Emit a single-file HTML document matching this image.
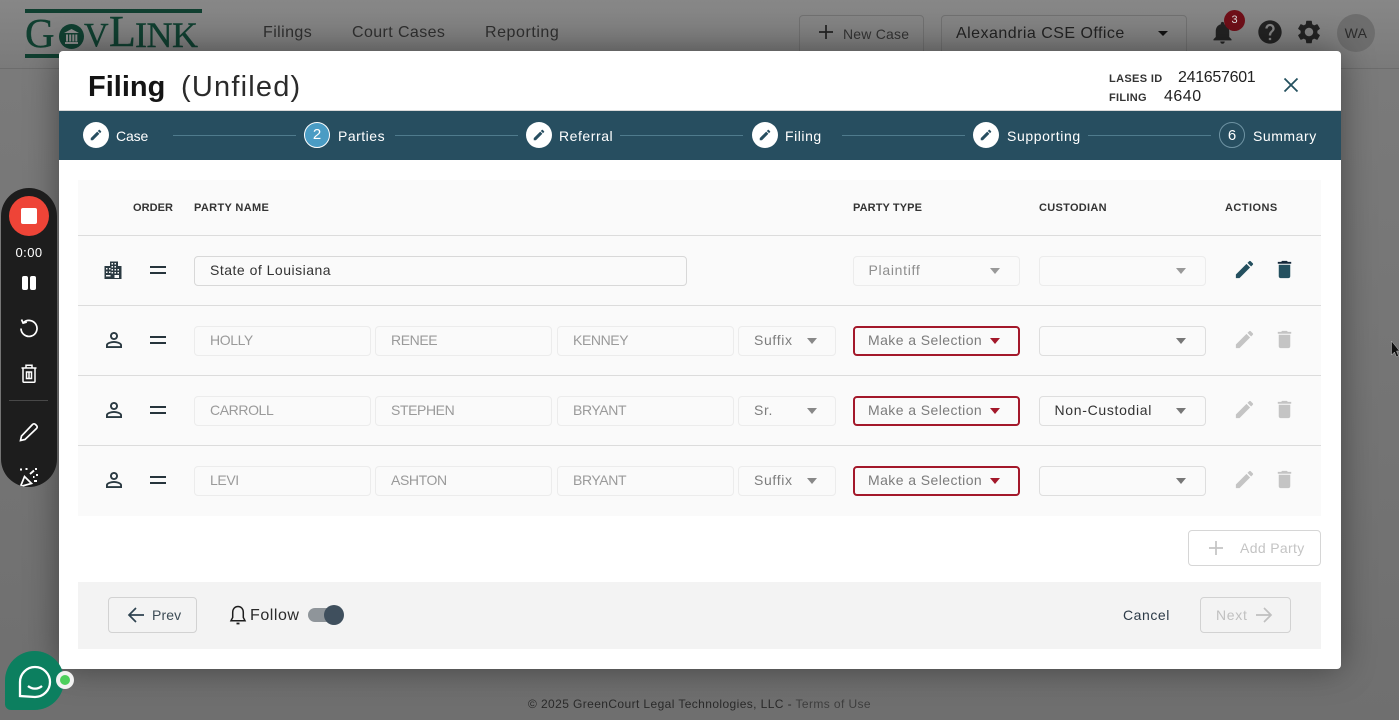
<!DOCTYPE html>
<html lang="en"><head><meta charset="utf-8"><title>Filing</title>
<style>
html,body{margin:0;padding:0;width:1399px;height:720px;overflow:hidden;background:#727272;font-family:"Liberation Sans",sans-serif}
.t,.f,.s,svg,.a,.l,.h{position:absolute}
.t{white-space:nowrap;line-height:20px}
.f,.s{box-sizing:border-box;height:29.5px;border:1.5px solid #ececec;border-radius:4px;background:#fafafa;font-size:14px;line-height:26.5px;padding-left:14.5px;letter-spacing:.5px;color:#9a9a9a;white-space:nowrap}
.u{letter-spacing:-.4px}
.s{border-color:#dedede;color:#7d7d7d}
.s.e{border:2px solid #a3182a;line-height:25.5px;padding-left:13px;letter-spacing:.42px;color:#7c7c7c}
.s.n{color:#333;letter-spacing:.68px}
.c{position:absolute;width:0;height:0;border-left:5.5px solid transparent;border-right:5.5px solid transparent;border-top:6px solid #777}
.l{height:1px;background:#dcdcdc;left:78px;width:1243px}
.h{font-size:11px;font-weight:bold;letter-spacing:.3px;color:#333;line-height:14px;white-space:nowrap}
.st{color:#fff;font-size:14px;letter-spacing:.5px;position:absolute;line-height:20px;top:126px;white-space:nowrap}
.cl{position:absolute;top:135px;height:1px;width:123px;background:#4f7b8d}
.ci{position:absolute;top:122px;width:26px;height:26px;border-radius:50%;background:#fff}
.ci svg{left:6px;top:6px}
.lg{font-family:"Liberation Serif",serif;color:#103f30;-webkit-text-stroke:.4px #103f30}
</style></head><body>

<!-- page background -->
<div class="a" style="left:0;top:0;width:1399px;height:68px;background:linear-gradient(#878787,#7a7a7a);border-bottom:1px solid #6c6c6c"></div>
<div class="a" style="left:0;top:69px;width:1399px;height:651px;background:linear-gradient(#7a7a7a,#6f6f6f)"></div>

<!-- logo -->
<div class="a" style="left:25px;top:9px;width:177px;height:3.5px;background:#103f30"></div>
<div class="a" style="left:25px;top:54px;width:177px;height:3.5px;background:#103f30"></div>
<div class="t lg" style="left:25px;top:15px;font-size:41px;line-height:36px">G</div>
<div class="a" style="left:59px;top:24px;width:25px;height:25px;border-radius:50%;background:#103f30"></div>
<svg style="left:63px;top:28px" width="17" height="17" viewBox="0 0 17 17"><path d="M8.5 1L16 5H1zM2 14h13v2H2zM3 6.500h2v7H3zM6.200 6.500h2v7h-2zM9.300 6.500h2v7h-2zM12.300 6.500h2v7h-2z" fill="#8b8b8b"/></svg>
<div class="t lg" style="left:84px;top:21px;font-size:34px;line-height:30px">V</div>
<div class="t lg" style="left:109px;top:12px;font-size:44px;line-height:40px">L</div>
<div class="t lg" style="left:135px;top:19px;font-size:36px;line-height:32px;letter-spacing:-.5px">INK</div>

<!-- nav -->
<div class="t" style="left:263px;top:23px;font-size:16px;letter-spacing:.42px;color:#2f2f2f">Filings</div>
<div class="t" style="left:352px;top:23px;font-size:16px;letter-spacing:.4px;color:#2f2f2f">Court Cases</div>
<div class="t" style="left:485px;top:23px;font-size:16px;letter-spacing:.55px;color:#2f2f2f">Reporting</div>

<div class="a" style="left:799px;top:15px;width:125px;height:50px;box-sizing:border-box;border:1px solid #707070;border-radius:4px"></div>
<svg style="left:817px;top:23px" width="18" height="18" viewBox="0 0 18 18"><path d="M9 2v14M2 9h14" stroke="#222" stroke-width="1.700" fill="none"/></svg>
<div class="t" style="left:843px;top:24px;font-size:14px;letter-spacing:.2px;color:#333">New Case</div>
<div class="a" style="left:941px;top:15px;width:246px;height:50px;box-sizing:border-box;border:1px solid #707070;border-radius:4px"></div>
<div class="t" style="left:956px;top:24px;font-size:16px;letter-spacing:.47px;color:#222">Alexandria CSE Office</div>
<div class="c" style="left:1158px;top:31px;border-top-color:#111;border-left-width:5px;border-right-width:5px;border-top-width:5px"></div>

<svg style="left:1209px;top:19px" width="27" height="27" viewBox="0 0 24 24"><path fill="#222" d="M12 22c1.100 0 2-.9 2-2h-4c0 1.100.9 2 2 2zm6-6v-5c0-3.070-1.630-5.640-4.500-6.320V4c0-.83-.67-1.500-1.500-1.500s-1.500.67-1.500 1.500v.68C7.640 5.360 6 7.920 6 11v5l-2 2v1h16v-1l-2-2z"/></svg>
<div class="a" style="left:1224px;top:10px;width:21px;height:21px;border-radius:50%;background:#6e0f18;color:#ddd;font-size:11px;line-height:21px;text-align:center">3</div>
<svg style="left:1256px;top:18px" width="28" height="28" viewBox="0 0 24 24"><path fill="#222" d="M12 2C6.480 2 2 6.480 2 12s4.480 10 10 10 10-4.480 10-10S17.520 2 12 2zm1 17h-2v-2h2v2zm2.070-7.750l-.9.92C13.450 12.900 13 13.500 13 15h-2v-.5c0-1.100.45-2.100 1.170-2.830l1.240-1.260c.37-.36.59-.86.59-1.410 0-1.100-.9-2-2-2s-2 .9-2 2H8c0-2.210 1.790-4 4-4s4 1.790 4 4c0 .88-.36 1.680-.93 2.250z"/></svg>
<svg style="left:1295px;top:18px" width="28" height="28" viewBox="0 0 24 24"><path fill="#222" d="M19.140 12.940c.04-.3.06-.61.06-.94 0-.32-.02-.64-.07-.94l2.030-1.580c.18-.14.23-.41.12-.61l-1.920-3.320c-.12-.22-.37-.29-.59-.22l-2.390.96c-.5-.38-1.030-.7-1.620-.94l-.36-2.540c-.04-.24-.24-.41-.48-.41h-3.840c-.24 0-.43.17-.47.41l-.36 2.540c-.59.24-1.130.57-1.620.94l-2.390-.96c-.22-.08-.47 0-.59.22L2.740 8.870c-.12.21-.08.47.12.61l2.030 1.580c-.05.3-.09.63-.09.94s.02.64.07.94l-2.030 1.580c-.18.14-.23.41-.12.61l1.920 3.320c.12.22.37.29.59.22l2.390-.96c.5.38 1.030.7 1.620.94l.36 2.540c.05.24.24.41.48.41h3.840c.24 0 .44-.17.47-.41l.36-2.540c.59-.24 1.130-.56 1.620-.94l2.390.96c.22.08.47 0 .59-.22l1.920-3.320c.12-.22.07-.47-.12-.61l-2.010-1.580zM12 15.600c-1.980 0-3.600-1.620-3.600-3.600s1.620-3.600 3.600-3.600 3.600 1.620 3.600 3.600-1.620 3.600-3.600 3.600z"/></svg>
<div class="a" style="left:1337px;top:14px;width:38px;height:38px;border-radius:50%;background:#6d6d6d;color:#2c2c2c;font-size:14px;line-height:38px;text-align:center;letter-spacing:.3px">WA</div>

<!-- footer -->
<div class="t" style="left:528px;top:694px;font-size:12px;letter-spacing:.4px;color:#2a2a2a">© 2025 GreenCourt Legal Technologies, LLC - <span style="color:#3e3e3e">Terms of Use</span></div>

<!-- modal -->
<div class="a" style="left:59px;top:51px;width:1282px;height:618px;background:#fff;border-radius:4px;box-shadow:0 0 34px rgba(0,0,0,.42)"></div>
<div class="t" style="left:88px;top:69px;font-size:29px;line-height:36px;font-weight:bold;color:#141414">Filing</div>
<div class="t" style="left:181px;top:69px;font-size:29px;line-height:36px;letter-spacing:1.2px;color:#2b2b2b">(Unfiled)</div>
<div class="t" style="left:1109px;top:69px;font-size:11px;font-weight:bold;letter-spacing:.35px;color:#333">LASES ID</div>
<div class="t" style="left:1178px;top:68px;font-size:16px;letter-spacing:-.3px;color:#222">241657601</div>
<div class="t" style="left:1109px;top:88px;font-size:11px;font-weight:bold;letter-spacing:.3px;color:#333">FILING</div>
<div class="t" style="left:1164px;top:87px;font-size:16px;letter-spacing:.5px;color:#222">4640</div>
<svg style="left:1281px;top:75px" width="20" height="20" viewBox="0 0 20 20"><path d="M3.500 3.500l13 13M16.500 3.500l-13 13" stroke="#24505f" stroke-width="1.800" fill="none"/></svg>

<!-- stepper -->
<div class="a" style="left:59px;top:110px;width:1282px;height:1px;background:#d9d9d9"></div>
<div class="a" style="left:59px;top:111px;width:1282px;height:49px;background:#274e60"></div>
<div class="ci" style="left:82.500px"><svg width="14" height="14" viewBox="0 0 24 24"><path fill="#274e60" d="M3 17.250V21h3.750L17.810 9.940l-3.750-3.750L3 17.250zM20.710 7.040c.39-.39.39-1.020 0-1.410l-2.340-2.340c-.39-.39-1.020-.39-1.410 0l-1.830 1.830 3.750 3.750 1.830-1.830z"/></svg></div>
<div class="st" style="left:116px;letter-spacing:-.15px">Case</div>
<div class="cl" style="left:173px"></div>
<div class="a" style="left:304px;top:122px;width:26px;height:26px;box-sizing:border-box;border:1.500px solid #fff;border-radius:50%;background:#4a9cc4;color:#fff;font-size:15px;line-height:24px;text-align:center">2</div>
<div class="st" style="left:338px">Parties</div>
<div class="cl" style="left:395px"></div>
<div class="ci" style="left:526px"><svg width="14" height="14" viewBox="0 0 24 24"><path fill="#274e60" d="M3 17.250V21h3.750L17.810 9.940l-3.750-3.750L3 17.250zM20.710 7.040c.39-.39.39-1.020 0-1.410l-2.340-2.340c-.39-.39-1.020-.39-1.410 0l-1.830 1.830 3.750 3.750 1.830-1.830z"/></svg></div>
<div class="st" style="left:559px;letter-spacing:.55px">Referral</div>
<div class="cl" style="left:620px"></div>
<div class="ci" style="left:751.500px"><svg width="14" height="14" viewBox="0 0 24 24"><path fill="#274e60" d="M3 17.250V21h3.750L17.810 9.940l-3.750-3.750L3 17.250zM20.710 7.040c.39-.39.39-1.020 0-1.410l-2.340-2.340c-.39-.39-1.020-.39-1.410 0l-1.830 1.830 3.750 3.750 1.830-1.830z"/></svg></div>
<div class="st" style="left:785px;letter-spacing:.55px">Filing</div>
<div class="cl" style="left:842px"></div>
<div class="ci" style="left:973px"><svg width="14" height="14" viewBox="0 0 24 24"><path fill="#274e60" d="M3 17.250V21h3.750L17.810 9.940l-3.750-3.750L3 17.250zM20.710 7.040c.39-.39.39-1.020 0-1.410l-2.340-2.340c-.39-.39-1.020-.39-1.410 0l-1.830 1.830 3.750 3.750 1.830-1.830z"/></svg></div>
<div class="st" style="left:1007px;letter-spacing:.6px">Supporting</div>
<div class="cl" style="left:1088px"></div>
<div class="a" style="left:1219px;top:122px;width:26px;height:26px;box-sizing:border-box;border:1px solid #6e93a3;border-radius:50%;color:#fff;font-size:15px;line-height:25px;text-align:center">6</div>
<div class="st" style="left:1253px;letter-spacing:.55px">Summary</div>

<!-- table -->
<div class="a" style="left:78px;top:180px;width:1243px;height:336px;background:#fafafa"></div>
<div class="h" style="left:133px;top:201px;letter-spacing:.05px">ORDER</div>
<div class="h" style="left:194px;top:201px;letter-spacing:.35px">PARTY NAME</div>
<div class="h" style="left:853px;top:201px;letter-spacing:.1px">PARTY TYPE</div>
<div class="h" style="left:1039px;top:201px;letter-spacing:.3px">CUSTODIAN</div>
<div class="h" style="left:1225px;top:201px;letter-spacing:.45px">ACTIONS</div>
<div class="l" style="top:235px"></div>
<div class="l" style="top:305px"></div>
<div class="l" style="top:375px"></div>
<div class="l" style="top:445px"></div>

<!-- row 1 -->
<svg style="left:104px;top:261px" width="18" height="18" viewBox="0 0 18 18"><path fill="#2b3a42" fill-rule="evenodd" d="M6 .5h8v4.500h3.500V18H.500V5H6zM7.500 2v1.500H9V2zM10.500 2v1.500H12V2zM7.500 5v1.500H9V5zM10.500 5v1.500H12V5zM2 7v1.500h1.500V7zM5 7v1.500h1.500V7zM7.500 8v1.500H9V8zM10.500 8v1.500H12V8zM13.500 8v1.500H15V8zM2 10.500V12h1.500v-1.500zM5 10.500V12h1.500v-1.500zM7.500 11v1.500H9V11zM10.500 11v1.500H12V11zM13.500 11v1.500H15V11zM2 14v1.500h4.500V14zM10.500 14v3H15v-3z"/></svg>
<div class="a" style="left:150px;top:266px;width:16px;height:2px;background:#26343c"></div>
<div class="a" style="left:150px;top:272px;width:16px;height:2px;background:#26343c"></div>
<div class="f" style="left:194px;top:256px;width:493px;border-color:#d8d8d8;color:#333;padding-left:15px">State of Louisiana</div>
<div class="f" style="left:853px;top:256px;width:167px;color:#8e8e8e;letter-spacing:.7px">Plaintiff</div><div class="c" style="left:990px;top:268px;border-top-color:#999"></div>
<div class="f" style="left:1039px;top:256px;width:167px"></div><div class="c" style="left:1176px;top:268px;border-top-color:#999"></div>
<svg style="left:1233px;top:258px" width="23" height="23" viewBox="0 0 24 24"><path fill="#24505f" d="M3 17.250V21h3.750L17.810 9.940l-3.750-3.750L3 17.250zM20.710 7.040c.39-.39.39-1.020 0-1.410l-2.340-2.340c-.39-.39-1.020-.39-1.410 0l-1.830 1.830 3.750 3.750 1.830-1.830z"/></svg>
<svg style="left:1273px;top:258px" width="23" height="23" viewBox="0 0 24 24"><path fill="#24505f" d="M6 19c0 1.100.9 2 2 2h8c1.100 0 2-.9 2-2V7H6v12z"/><path fill="#14283a" d="M19 4h-3.500l-1-1h-5l-1 1H5v2h14V4z"/></svg>

<!-- row 2 -->
<svg style="left:102px;top:328px" width="24" height="24" viewBox="0 0 24 24"><path fill="#2b3a42" d="M12 5.900a2.100 2.100 0 110 4.200 2.100 2.100 0 010-4.200m0 9c2.970 0 6.100 1.460 6.100 2.100v1.100H5.900V17c0-.64 3.130-2.100 6.100-2.100M12 4C9.790 4 8 5.790 8 8s1.790 4 4 4 4-1.790 4-4-1.790-4-4-4zm0 9c-2.670 0-8 1.340-8 4v3h16v-3c0-2.660-5.330-4-8-4z"/></svg>
<div class="a" style="left:150px;top:336px;width:16px;height:2px;background:#26343c"></div>
<div class="a" style="left:150px;top:342px;width:16px;height:2px;background:#26343c"></div>
<div class="f u" style="left:194px;top:326px;width:177px;padding-left:15px">HOLLY</div>
<div class="f u" style="left:375px;top:326px;width:177px;padding-left:15px">RENEE</div>
<div class="f u" style="left:557px;top:326px;width:177px;padding-left:15px">KENNEY</div>
<div class="f" style="left:738px;top:326px;width:98px;color:#7d7d7d;letter-spacing:.65px;padding-left:15px">Suffix</div><div class="c" style="left:807px;top:338px;border-top-color:#888"></div>
<div class="s e" style="left:853px;top:326px;width:167px">Make a Selection</div><div class="c" style="left:990px;top:338px;border-top-color:#a3182a"></div>
<div class="s" style="left:1039px;top:326px;width:167px"></div><div class="c" style="left:1176px;top:338px"></div>
<svg style="left:1233px;top:328px" width="23" height="23" viewBox="0 0 24 24"><path fill="#c4c4c4" d="M3 17.250V21h3.750L17.810 9.940l-3.750-3.750L3 17.250zM20.710 7.040c.39-.39.39-1.020 0-1.410l-2.340-2.340c-.39-.39-1.020-.39-1.410 0l-1.830 1.830 3.750 3.750 1.830-1.830z"/></svg>
<svg style="left:1273px;top:328px" width="23" height="23" viewBox="0 0 24 24"><path fill="#c4c4c4" d="M6 19c0 1.100.9 2 2 2h8c1.100 0 2-.9 2-2V7H6v12zM19 4h-3.500l-1-1h-5l-1 1H5v2h14V4z"/></svg>

<!-- row 3 -->
<svg style="left:102px;top:398px" width="24" height="24" viewBox="0 0 24 24"><path fill="#2b3a42" d="M12 5.900a2.100 2.100 0 110 4.200 2.100 2.100 0 010-4.200m0 9c2.970 0 6.100 1.460 6.100 2.100v1.100H5.900V17c0-.64 3.130-2.100 6.100-2.100M12 4C9.790 4 8 5.790 8 8s1.790 4 4 4 4-1.790 4-4-1.790-4-4-4zm0 9c-2.670 0-8 1.340-8 4v3h16v-3c0-2.660-5.330-4-8-4z"/></svg>
<div class="a" style="left:150px;top:406px;width:16px;height:2px;background:#26343c"></div>
<div class="a" style="left:150px;top:412px;width:16px;height:2px;background:#26343c"></div>
<div class="f u" style="left:194px;top:396px;width:177px;padding-left:15px">CARROLL</div>
<div class="f u" style="left:375px;top:396px;width:177px;padding-left:15px">STEPHEN</div>
<div class="f u" style="left:557px;top:396px;width:177px;padding-left:15px">BRYANT</div>
<div class="f" style="left:738px;top:396px;width:98px;color:#7d7d7d;letter-spacing:.65px;padding-left:15px">Sr.</div><div class="c" style="left:807px;top:408px;border-top-color:#888"></div>
<div class="s e" style="left:853px;top:396px;width:167px">Make a Selection</div><div class="c" style="left:990px;top:408px;border-top-color:#a3182a"></div>
<div class="s n" style="left:1039px;top:396px;width:167px">Non-Custodial</div><div class="c" style="left:1176px;top:408px"></div>
<svg style="left:1233px;top:398px" width="23" height="23" viewBox="0 0 24 24"><path fill="#c4c4c4" d="M3 17.250V21h3.750L17.810 9.940l-3.750-3.750L3 17.250zM20.710 7.040c.39-.39.39-1.020 0-1.410l-2.340-2.340c-.39-.39-1.020-.39-1.410 0l-1.830 1.830 3.750 3.750 1.830-1.830z"/></svg>
<svg style="left:1273px;top:398px" width="23" height="23" viewBox="0 0 24 24"><path fill="#c4c4c4" d="M6 19c0 1.100.9 2 2 2h8c1.100 0 2-.9 2-2V7H6v12zM19 4h-3.500l-1-1h-5l-1 1H5v2h14V4z"/></svg>

<!-- row 4 -->
<svg style="left:102px;top:468px" width="24" height="24" viewBox="0 0 24 24"><path fill="#2b3a42" d="M12 5.900a2.100 2.100 0 110 4.200 2.100 2.100 0 010-4.200m0 9c2.970 0 6.100 1.460 6.100 2.100v1.100H5.900V17c0-.64 3.130-2.100 6.100-2.100M12 4C9.790 4 8 5.790 8 8s1.790 4 4 4 4-1.790 4-4-1.790-4-4-4zm0 9c-2.670 0-8 1.340-8 4v3h16v-3c0-2.660-5.330-4-8-4z"/></svg>
<div class="a" style="left:150px;top:476px;width:16px;height:2px;background:#26343c"></div>
<div class="a" style="left:150px;top:482px;width:16px;height:2px;background:#26343c"></div>
<div class="f u" style="left:194px;top:466px;width:177px;padding-left:15px">LEVI</div>
<div class="f u" style="left:375px;top:466px;width:177px;padding-left:15px">ASHTON</div>
<div class="f u" style="left:557px;top:466px;width:177px;padding-left:15px">BRYANT</div>
<div class="f" style="left:738px;top:466px;width:98px;color:#7d7d7d;letter-spacing:.65px;padding-left:15px">Suffix</div><div class="c" style="left:807px;top:478px;border-top-color:#888"></div>
<div class="s e" style="left:853px;top:466px;width:167px">Make a Selection</div><div class="c" style="left:990px;top:478px;border-top-color:#a3182a"></div>
<div class="s" style="left:1039px;top:466px;width:167px"></div><div class="c" style="left:1176px;top:478px"></div>
<svg style="left:1233px;top:468px" width="23" height="23" viewBox="0 0 24 24"><path fill="#c4c4c4" d="M3 17.250V21h3.750L17.810 9.940l-3.750-3.750L3 17.250zM20.710 7.040c.39-.39.39-1.020 0-1.410l-2.340-2.340c-.39-.39-1.020-.39-1.410 0l-1.830 1.830 3.750 3.750 1.830-1.830z"/></svg>
<svg style="left:1273px;top:468px" width="23" height="23" viewBox="0 0 24 24"><path fill="#c4c4c4" d="M6 19c0 1.100.9 2 2 2h8c1.100 0 2-.9 2-2V7H6v12zM19 4h-3.500l-1-1h-5l-1 1H5v2h14V4z"/></svg>

<!-- add party -->
<div class="a" style="left:1188px;top:530px;width:133px;height:36px;box-sizing:border-box;border:1.500px solid #d6d6d6;border-radius:4px"></div>
<svg style="left:1207px;top:539px" width="18" height="18" viewBox="0 0 18 18"><path d="M9 2v14M2 9h14" stroke="#c4c4c4" stroke-width="1.700" fill="none"/></svg>
<div class="t" style="left:1240px;top:538px;font-size:14px;letter-spacing:.35px;color:#c4c4c4">Add Party</div>

<!-- footer bar -->
<div class="a" style="left:78px;top:582px;width:1243px;height:67px;background:#f3f3f3"></div>
<div class="a" style="left:108px;top:597px;width:89px;height:36px;box-sizing:border-box;border:1.500px solid #d2d2d2;border-radius:4px"></div>
<svg style="left:126px;top:605px" width="20" height="20" viewBox="0 0 20 20"><path d="M18 10H3M10 3l-7 7 7 7" stroke="#2f4350" stroke-width="1.700" fill="none"/></svg>
<div class="t" style="left:152px;top:605px;font-size:14px;letter-spacing:.1px;color:#3d4c56">Prev</div>
<svg style="left:229px;top:605px" width="18" height="21" viewBox="0 0 18 21"><path d="M9 1.500c-3.300 0-5.300 2.500-5.300 6v5L2 15.700h14l-1.700-3.200v-5c0-3.500-2-6-5.300-6z" fill="none" stroke="#1d1d1d" stroke-width="1.500"/><path d="M7.500 18.500h3" stroke="#1d1d1d" stroke-width="1.800"/></svg>
<div class="t" style="left:250px;top:606px;font-size:16px;letter-spacing:.55px;color:#2a2a2a">Follow</div>
<div class="a" style="left:308px;top:608px;width:30px;height:14px;border-radius:7px;background:#8f959a"></div>
<div class="a" style="left:324px;top:605px;width:20px;height:20px;border-radius:50%;background:#3f4f5d"></div>
<div class="t" style="left:1123px;top:605px;font-size:14px;letter-spacing:.55px;color:#2c3a47">Cancel</div>
<div class="a" style="left:1200px;top:597px;width:91px;height:36px;box-sizing:border-box;border:1.500px solid #d2d2d2;border-radius:4px"></div>
<div class="t" style="left:1216px;top:605px;font-size:14px;letter-spacing:.7px;color:#c0c0c0">Next</div>
<svg style="left:1254px;top:605px" width="20" height="20" viewBox="0 0 20 20"><path d="M2 10h15M10 3l7 7-7 7" stroke="#c0c0c0" stroke-width="1.700" fill="none"/></svg>

<!-- recorder -->
<div class="a" style="left:1px;top:188px;width:56px;height:299px;border-radius:28px;background:#1d1d1d;overflow:hidden">
  <div class="a" style="left:8px;top:8px;width:40px;height:40px;border-radius:50%;background:#ee4437"></div>
  <div class="a" style="left:20px;top:20px;width:16px;height:16px;border-radius:2px;background:#fff"></div>
  <div class="t" style="left:0;width:56px;text-align:center;top:55px;font-size:13px;letter-spacing:.4px;color:#fff">0:00</div>
  <div class="a" style="left:21px;top:88px;width:6px;height:14px;border-radius:2px;background:#fff"></div>
  <div class="a" style="left:29px;top:88px;width:6px;height:14px;border-radius:2px;background:#fff"></div>
  <svg style="left:18px;top:130px" width="20" height="20" viewBox="0 0 20 20"><path d="M4.300 4.800A8 8 0 1 1 2 10.500M2.500 1.500l1.600 3.600 3.700-1" fill="none" stroke="#fff" stroke-width="1.700"/></svg>
  <svg style="left:20px;top:176px" width="16" height="19" viewBox="0 0 16 19"><path d="M.5 4h15M5 3.500V1.200h6v2.300M2 4v13.200a1 1 0 0 0 1 1h10a1 1 0 0 0 1-1V4M5.500 8h5v6.500h-5zM8 8v6.500" fill="none" stroke="#fff" stroke-width="1.500"/></svg>
  <div class="a" style="left:8px;top:212px;width:39px;height:1px;background:#484848"></div>
  <svg style="left:18px;top:234px" width="20" height="20" viewBox="0 0 20 20"><path d="M1.500 18.500l1-4.500L13.500 2.500a2 2 0 0 1 3 0l1 1a2 2 0 0 1 0 3L6 17.500z" fill="none" stroke="#fff" stroke-width="1.700"/></svg>
  <svg style="left:18px;top:280px" width="20" height="20" viewBox="0 0 20 20"><path d="M1.500 18.500l4-10 7 7z" fill="none" stroke="#fff" stroke-width="1.700"/><path d="M1 1.500h2M6.500 1h2M16 1h2M11 6l4-3.500M14 9h1.500M17 7h2M15 13h3" fill="none" stroke="#fff" stroke-width="1.900"/></svg>
</div>

<!-- chat -->
<div class="a" style="left:5px;top:651px;width:59px;height:59px;background:#0c7f5f;border-radius:50% 50% 50% 6px"></div>
<svg style="left:18px;top:665px" width="34" height="34" viewBox="0 0 34 34"><path d="M2 31V17a15 15 0 1 1 15 15z" fill="none" stroke="#fff" stroke-width="2.300"/><path d="M10 21c4 3.500 10 3.500 14 0" fill="none" stroke="#fff" stroke-width="2.300"/></svg>
<div class="a" style="left:56px;top:671px;width:18px;height:18px;border-radius:50%;background:#f2f2f2"></div>
<div class="a" style="left:60px;top:675px;width:10px;height:10px;border-radius:50%;background:#4ccf5d"></div>

<!-- cursor -->
<svg style="left:1391px;top:341px" width="8" height="18" viewBox="0 0 8 18"><path d="M.5 0v14l3-3 2 5 2-1-2-5h3z" fill="#111" stroke="#ddd" stroke-width=".4"/></svg>
</body></html>
